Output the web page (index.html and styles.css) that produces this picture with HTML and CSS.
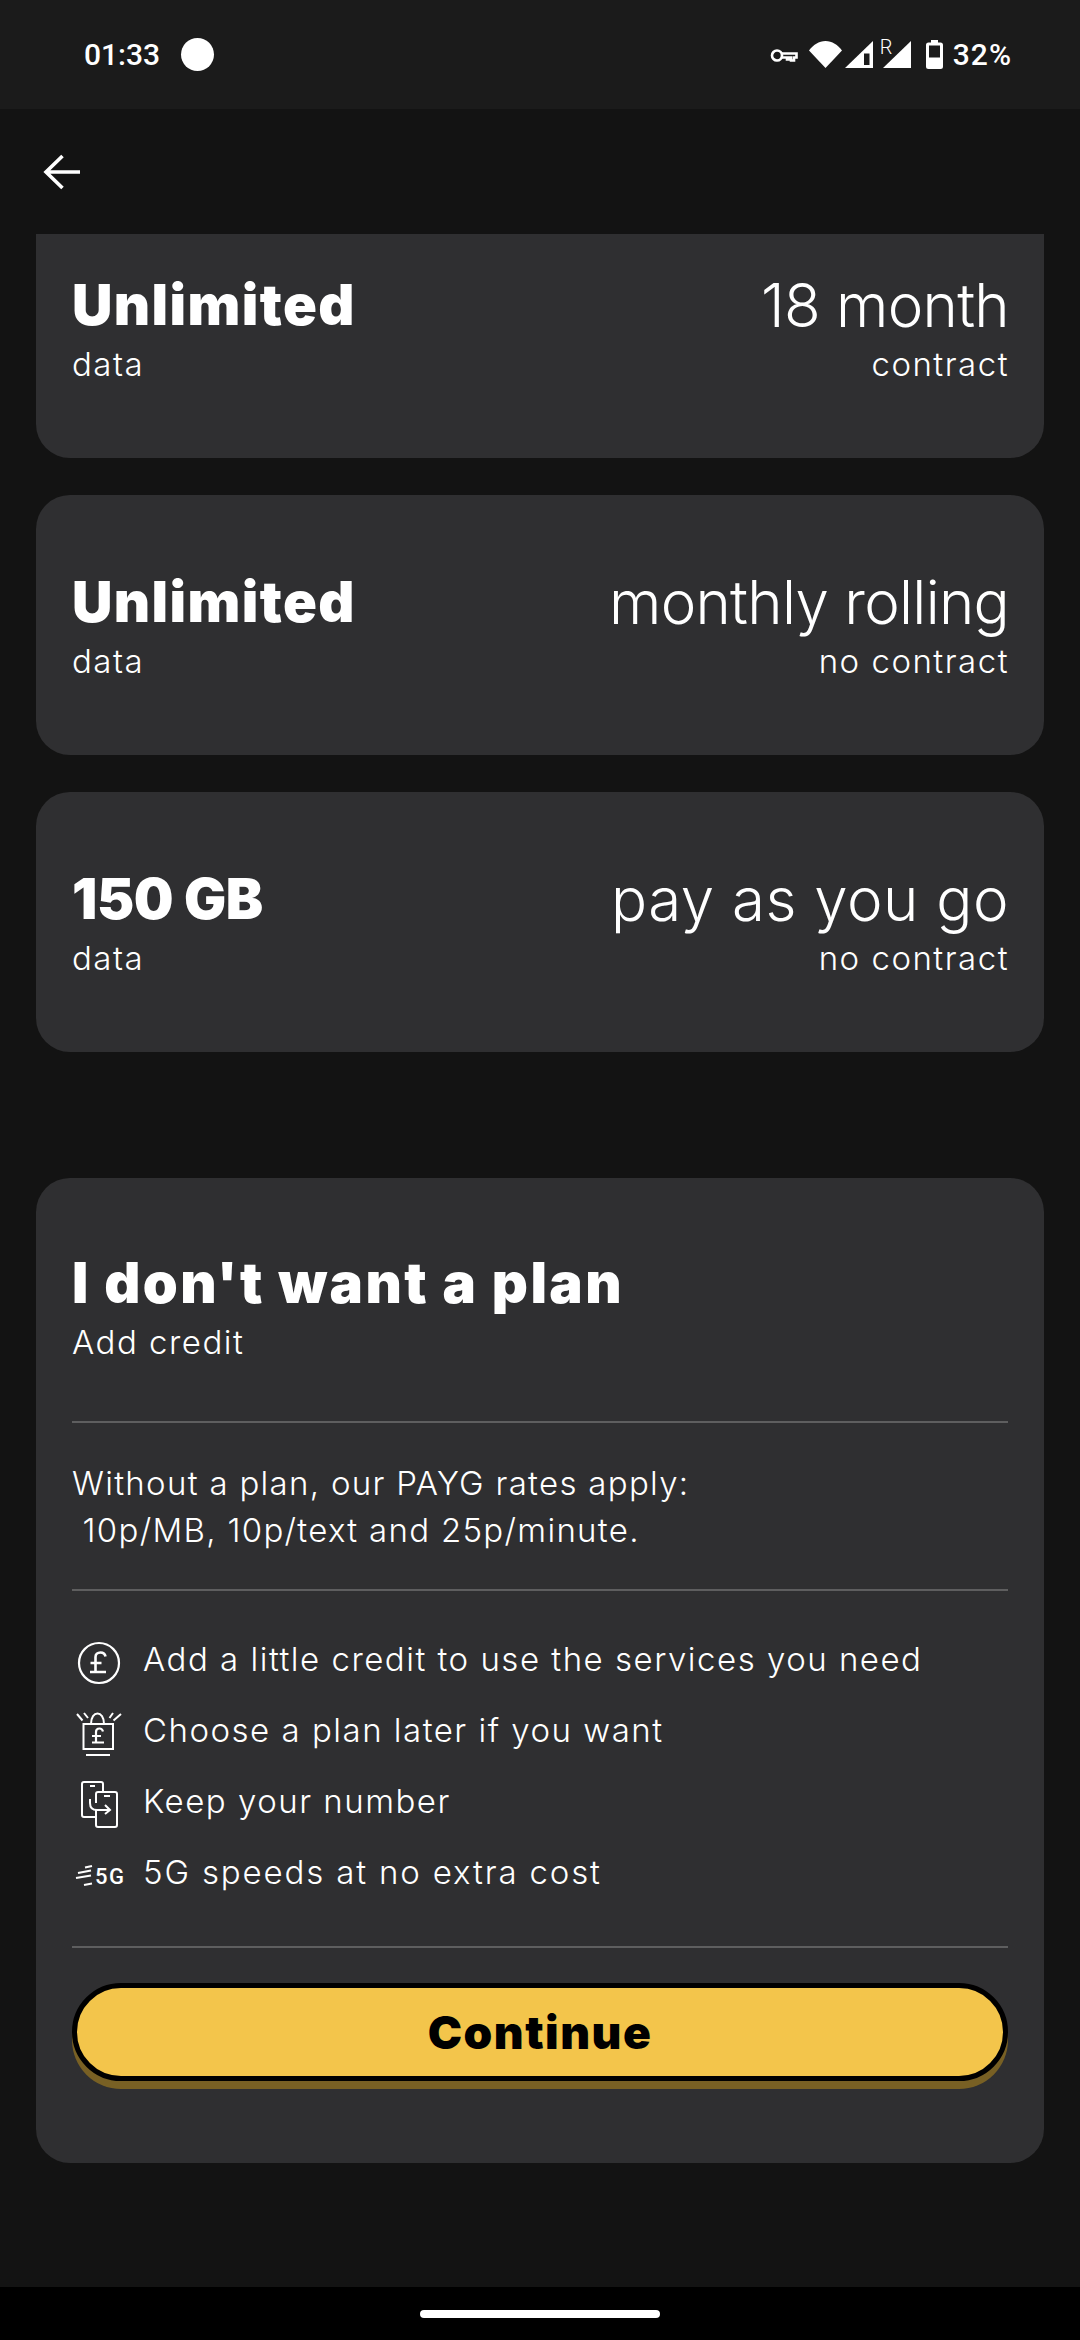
FILE: index.html
```html
<!DOCTYPE html>
<html lang="en">
<head>
    <meta charset="UTF-8">
    <title>Choose a plan</title>
    <link rel="stylesheet" href="styles.css">
</head>

<body>
    <div class="m_status">
        <span class="m_time">01:33</span>
        <span class="m_dot"></span>
        <div class="m_status_right">
            <svg class="m_key" width="28" height="15" viewBox="0 0 28 15" fill="none" stroke="#fff" stroke-width="2.6"><circle cx="7" cy="7.500" r="5"/><path d="M12 5.500h14.500v4h-2.500v3h-3v-3h-2v2h-2v-2h-5"/></svg>
            <svg class="m_wifi" width="33" height="27" viewBox="0 0 33 27"><path d="M0 9.500C4 4 10 0 16.500 0S29 4 33 9.500L16.500 27z" fill="#fff"/></svg>
            <svg class="m_sig" width="28" height="27" viewBox="0 0 28 27"><path d="M0 27L28 0v27z" fill="#fff"/><path d="M19 12.500h5.500v11.500H19z" fill="#1b1b1b"/></svg>
            <div class="m_roam">
                <span class="m_r">R</span>
                <svg width="28" height="27" viewBox="0 0 28 27"><path d="M0 27L28 0v27z" fill="#fff"/></svg>
            </div>
            <svg class="m_batt" width="17" height="29" viewBox="0 0 17 29"><path d="M5 0h7v2.500h2.500a2.500 2.500 0 0 1 2.500 2.500v21.500a2.500 2.500 0 0 1-2.500 2.500h-12A2.500 2.500 0 0 1 0 26.500V5a2.500 2.500 0 0 1 2.500-2.500H5z" fill="#fff"/><path d="M3 5.500h11v12H3z" fill="#1b1b1b"/></svg>
            <span class="m_pct">32%</span>
        </div>
    </div>

    <div class="m_head">
        <svg width="38" height="36" viewBox="0 0 38 36" fill="none" stroke="#fff" stroke-width="3.600"><path d="M19.500 2L3 18l16.500 16M3 18h34"/></svg>
    </div>

    <div class="m_scroll">
        <div class="m_list">
            <div class="m_card">
                <div class="m_row">
                    <div><div class="m_big">Unlimited</div><div class="m_small">data</div></div>
                    <div class="m_right"><div class="m_term">18 month</div><div class="m_small">contract</div></div>
                </div>
            </div>
            <div class="m_card">
                <div class="m_row">
                    <div><div class="m_big">Unlimited</div><div class="m_small">data</div></div>
                    <div class="m_right"><div class="m_term">monthly rolling</div><div class="m_small">no contract</div></div>
                </div>
            </div>
            <div class="m_card">
                <div class="m_row">
                    <div><div class="m_big m_num">150 GB</div><div class="m_small">data</div></div>
                    <div class="m_right"><div class="m_term m_wide">pay as you go</div><div class="m_small">no contract</div></div>
                </div>
            </div>

            <div class="m_card m_noplan">
                <div class="m_big m_title">I don't want a plan</div>
                <div class="m_small">Add credit</div>
                <hr class="m_line m_line1">
                <p class="m_rates">Without a plan, our PAYG rates apply:<br>&nbsp;10p/MB, 10p/text and 25p/minute.</p>
                <hr class="m_line m_line2">
                <ul class="m_feats">
                    <li>
                        <div class="m_ic"><svg width="44" height="44" viewBox="0 0 44 44" fill="none" stroke="#fff" stroke-width="2.200"><circle cx="22" cy="22" r="20"/><path d="M28.500 15.500c-.5-2.500-2.500-4-5-4-3 0-5 2-5 4.500V31M13.500 22h11M13 31h16" stroke-width="2.600"/></svg></div>
                        <span>Add a little credit to use the services you need</span>
                    </li>
                    <li>
                        <div class="m_ic"><svg width="46" height="44" viewBox="0 0 46 44" fill="none" stroke="#fff" stroke-width="2"><path d="M1 2l5.500 6.500M8 1l4 5M37 1l-3.500 5M45 2l-7.500 6.500M7.500 12H37v25H7.500zM15 12c0-14 13-14 13 0M10 43h24"/><path d="M27 19.500c-.5-2-2-3-3.500-3-2 0-3.500 1.500-3.500 3.500v10M16 24h9M16 30.500h12" stroke-width="2.200"/></svg></div>
                        <span>Choose a plan later if you want</span>
                    </li>
                    <li>
                        <div class="m_ic"><svg width="37" height="47" viewBox="0 0 37 47" fill="none" stroke="#fff" stroke-width="2"><path d="M14 36H3a2 2 0 0 1-2-2V3a2 2 0 0 1 2-2h17a2 2 0 0 1 2 2v8M9 5h5M9 18v4c0 5 3 7 7 7h13M24 24l5 5-5 4"/><path d="M15 22v-9a2 2 0 0 1 2-2h17a2 2 0 0 1 2 2v31a2 2 0 0 1-2 2H17a2 2 0 0 1-2-2V29M23 15h6"/></svg></div>
                        <span>Keep your number</span>
                    </li>
                    <li>
                        <div class="m_ic"><svg width="50" height="30" viewBox="0 0 50 30" fill="none" stroke="#fff" stroke-width="2.200"><path d="M11 6.500l7-1.500M4 12l13-2.500M2 17l15-2.500M10 24l8-1.500"/><text x="21" y="23" class="m_5g">5G</text></svg></div>
                        <span class="m_wide5g">5G speeds at no extra cost</span>
                    </li>
                </ul>
                <hr class="m_line m_line3">
                <button class="m_button">Continue</button>
            </div>
        </div>
    </div>

    <div class="m_nav"><span class="m_handle"></span></div>
</body>
</html>
```

FILE: styles.css
```css
* {margin: 0;padding: 0;box-sizing: border-box;}
html, body {height: 100%;}
body {width: 1080px;height: 2340px;display: flex;flex-direction: column;background: #131313;color: #fff;font-family: "Inter", "Liberation Sans", sans-serif;overflow: hidden;}

.m_status {height: 109px;flex: none;display: flex;align-items: center;padding: 0 68px 0 84px;background: #1b1b1b;font-family: "Roboto", sans-serif;}
.m_time {font-size: 30px;font-weight: 500;}
.m_dot {width: 33px;height: 33px;margin-left: 21px;border-radius: 50%;background: #fff;}
.m_status_right {margin-left: auto;display: flex;align-items: center;}
.m_status_right svg {display: block;flex: none;}
.m_key {margin-right: 11px;margin-top: 1px;}
.m_sig {margin-left: 3px;}
.m_roam {position: relative;margin-left: 10px;}
.m_r {position: absolute;left: -3px;top: -4px;font-size: 20px;font-weight: 300;line-height: 20px;color: #fff;}
.m_batt {margin-left: 15px;}
.m_pct {margin-left: 10px;font-size: 30px;font-weight: 500;letter-spacing: 1px;}

.m_head {height: 125px;flex: none;display: flex;align-items: center;padding-left: 43px;}

.m_scroll {flex: 1;overflow: hidden;padding: 0 36px;}
.m_list {margin-top: -36px;}
.m_card {background: #2f2f31;border-radius: 34px;padding: 0 36px;margin-bottom: 37px;}
.m_row {height: 260px;display: flex;justify-content: space-between;align-items: flex-start;padding-top: 76px;}
.m_right {text-align: right;margin-right: -1px;}
.m_big {font-size: 56px;font-weight: 900;line-height: 62px;letter-spacing: 1.4px;}
.m_num {letter-spacing: -0.4px;}
.m_small {margin-top: 5px;font-size: 33px;font-weight: 300;line-height: 46px;letter-spacing: 1.5px;}
.m_term {font-size: 60px;font-weight: 300;line-height: 62px;letter-spacing: -0.7px;}
.m_term.m_wide {letter-spacing: 0.5px;}

.m_noplan {margin-top: 126px;height: 985px;padding-top: 74px;}
.m_title {letter-spacing: 2.4px;}
.m_line {border: 0;height: 2px;background: #5e5e5f;}
.m_line1 {margin-top: 56px;}
.m_rates {margin-top: 37px;font-size: 33px;font-weight: 300;line-height: 47px;letter-spacing: 1.3px;}
.m_line2 {margin-top: 35px;}
.m_feats {list-style: none;margin-top: 32px;}
.m_feats li {height: 71px;display: flex;align-items: center;font-size: 33px;font-weight: 300;letter-spacing: 1.5px;}
.m_wide5g {letter-spacing: 1.85px;}
.m_ic {width: 54px;margin-right: 17px;margin-top: 8px;flex: none;display: flex;justify-content: center;}
.m_ic svg {display: block;}
.m_5g {font-family: "Roboto", sans-serif;font-size: 22px;font-weight: 500;fill: #fff;stroke: none;}
.m_line3 {margin-top: 39px;}

.m_button {display: block;width: 100%;height: 98px;margin-top: 35px;border: 5px solid #000;border-radius: 49px;background: #f3c54b;box-shadow: 0 8px 0 #786024;color: #000;font-family: "Inter", sans-serif;font-size: 46px;font-weight: 900;letter-spacing: 1.5px;}

.m_nav {height: 53px;flex: none;display: flex;justify-content: center;align-items: center;background: #000;}
.m_handle {width: 240px;height: 8px;border-radius: 4px;background: #fff;}
```
